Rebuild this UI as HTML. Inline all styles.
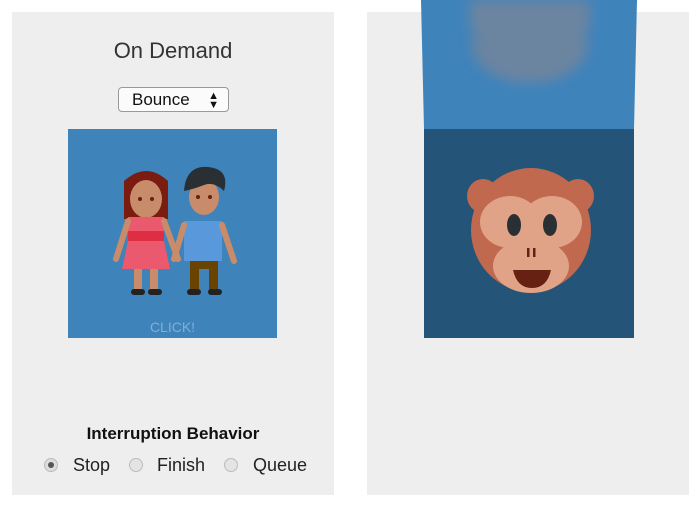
<!DOCTYPE html>
<html><head><style>
body{margin:0;width:700px;height:505px;background:#fff;position:relative;overflow:hidden;font-family:"Liberation Sans",sans-serif}
.card{position:absolute;top:12px;width:322px;height:483px;background:#eeeeee}
.t{position:absolute;left:0;width:322px;text-align:center;top:26px;font-size:22px;color:#333;font-weight:300}
.sel{position:absolute;left:106px;top:75px;width:109px;height:23px;border:1px solid #999;border-radius:4px;background:#fbfbfb;font-size:17px;color:#111;line-height:23px;padding-left:13px;box-sizing:border-box;width:111px;height:25px}
.h{position:absolute;left:0;width:322px;text-align:center;top:412px;font-size:17px;font-weight:bold;color:#111}
.r{position:absolute;top:443px;font-size:18px;color:#222}
.rb{position:absolute;top:446px;width:14px;height:14px;border-radius:50%;border:1px solid #bbb;background:#e4e4e4;box-sizing:border-box}
</style></head><body>
<div class="card" style="left:12px">
<div class="t">On Demand</div>
<div class="sel">Bounce<span style="position:absolute;right:9px;top:-1px;font-size:11px;line-height:9px;top:4px">▲<br>▼</span></div>
<div style="position:absolute;left:56px;top:117px;width:209px;height:209px;background:#3f83bb">
<svg width="209" height="209" viewBox="0 0 209 209">
<g>
<path d="M56 52 q22 -20 44 0 v38 h-44z" fill="#7a1c10"/>
<ellipse cx="78" cy="70" rx="16" ry="19" fill="#c98c6a"/>
<path d="M60 62 q18 -22 38 -6 v-4 q-20 -14 -38 0z" fill="#7a1c10"/>
<rect x="60" y="88" width="36" height="14" fill="#ea596e"/>
<rect x="60" y="102" width="36" height="10" fill="#dd2e44"/>
<path d="M60 112 h36 l6 28 h-48z" fill="#ea596e"/>
<rect x="66" y="140" width="8" height="24" fill="#c98c6a"/><rect x="82" y="140" width="8" height="24" fill="#c98c6a"/>
<rect x="63" y="160" width="14" height="6" rx="3" fill="#222"/><rect x="80" y="160" width="14" height="6" rx="3" fill="#222"/>
<path d="M60 92 l-12 38" stroke="#c98c6a" stroke-width="6" stroke-linecap="round"/>
<path d="M96 92 l14 38" stroke="#c98c6a" stroke-width="6" stroke-linecap="round"/>
<ellipse cx="136" cy="68" rx="15" ry="18" fill="#c98c6a"/>
<path d="M116 62 q2 -26 24 -24 q22 2 16 24 q-10 -10 -20 -6 q-10 4 -20 6z" fill="#292f33"/>
<rect x="116" y="92" width="38" height="40" fill="#5d9ae0" opacity=".9"/>
<path d="M116 96 l-10 34" stroke="#c98c6a" stroke-width="6" stroke-linecap="round"/>
<path d="M154 96 l12 36" stroke="#c98c6a" stroke-width="6" stroke-linecap="round"/>
<path d="M122 132 h28 v30 h-9 v-22 h-10 v22 h-9z" fill="#6b4300"/>
<rect x="119" y="160" width="14" height="6" rx="3" fill="#222"/><rect x="140" y="160" width="14" height="6" rx="3" fill="#222"/>
<circle cx="72" cy="70" r="2" fill="#662113"/><circle cx="84" cy="70" r="2" fill="#662113"/>
<circle cx="130" cy="68" r="2" fill="#662113"/><circle cx="142" cy="68" r="2" fill="#662113"/>
</g>
<text x="104.5" y="203" text-anchor="middle" font-size="14" fill="#7fb0d8" font-family="Liberation Sans">CLICK!</text>
</svg></div>
<div class="h">Interruption Behavior</div>
<div class="rb" style="left:32px;background:#ddd"><div style="width:6px;height:6px;border-radius:50%;background:#555;margin:3px"></div></div>
<div class="r" style="left:61px">Stop</div>
<div class="rb" style="left:117px"></div><div class="r" style="left:145px">Finish</div>
<div class="rb" style="left:212px"></div><div class="r" style="left:241px">Queue</div>
</div>
<div class="card" style="left:367px"></div>
<svg style="position:absolute;left:0;top:0" width="700" height="505">
<defs><filter id="b"><feGaussianBlur stdDeviation="6"/></filter></defs>
<path d="M421 0 H637 L634 129 H424Z" fill="#3f83bb"/>
<g filter="url(#b)" opacity=".75"><ellipse cx="530" cy="45" rx="58" ry="38" fill="#7a8597"/><rect x="470" y="0" width="120" height="30" fill="#7a8597"/></g>
<rect x="424" y="129" width="210" height="209" fill="#245478"/>
<ellipse cx="483" cy="196" rx="16" ry="17" fill="#c1694f"/><ellipse cx="578" cy="196" rx="16" ry="17" fill="#c1694f"/>
<ellipse cx="531" cy="230" rx="60" ry="62" fill="#c1694f"/>
<ellipse cx="510" cy="222" rx="30" ry="26" fill="#e0a387"/><ellipse cx="552" cy="222" rx="30" ry="26" fill="#e0a387"/>
<ellipse cx="531" cy="266" rx="38" ry="27" fill="#e0a387"/>
<ellipse cx="514" cy="225" rx="7" ry="11" fill="#292f33"/><ellipse cx="550" cy="225" rx="7" ry="11" fill="#292f33"/>
<rect x="527" y="248" width="2.5" height="9" fill="#662113"/><rect x="533" y="248" width="2.5" height="9" fill="#662113"/>
<path d="M513 270 h38 q-4 18 -19 18 q-15 0 -19 -18z" fill="#662113"/>
</svg>
</body></html>
